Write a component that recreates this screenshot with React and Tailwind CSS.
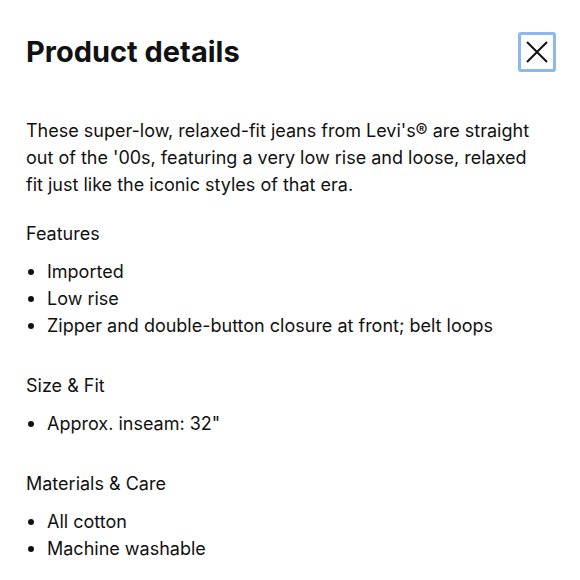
import React from "react";

function Bullet({ children }) {
  return (
    <li className="flex items-center">
      <span className="w-[21px] shrink-0 flex items-center pl-[2px]">
        <span className="block w-[6px] h-[6px] rounded-full bg-[#111]" />
      </span>
      <span>{children}</span>
    </li>
  );
}

export default function App() {
  return (
    <div className="w-[580px] h-[580px] bg-white overflow-hidden text-[#111]" style={{ fontFamily: 'Inter, "Liberation Sans", Arial, sans-serif' }}>
      <div className="flex items-start justify-between pl-[26px] pr-[24px] pt-[32px]">
        <h1 className="text-[29px] font-bold leading-[40px] tracking-[0px]">Product details</h1>
        <button className="w-[38px] h-[40px] border-[3px] border-[#8bb9ee] rounded-[3px] flex items-center justify-center">
          <svg width="22" height="22" viewBox="0 0 22 22" fill="none" stroke="#111" strokeWidth="2">
            <path d="M1 1 L21 21 M21 1 L1 21" />
          </svg>
        </button>
      </div>
      <div className="px-[26px] pt-[45px] text-[18px] leading-[27px]">
        <p className="whitespace-nowrap">These super-low, relaxed-fit jeans from Levi's® are straight<br />out of the '00s, featuring a very low rise and loose, relaxed<br />fit just like the iconic styles of that era.</p>
        <h2 className="mt-[22px]">Features</h2>
        <ul className="mt-[11px]">
          <Bullet>Imported</Bullet>
          <Bullet>Low rise</Bullet>
          <Bullet>Zipper and double-button closure at front; belt loops</Bullet>
        </ul>
        <h2 className="mt-[33px]">Size &amp; Fit</h2>
        <ul className="mt-[11px]">
          <Bullet>Approx. inseam: 32"</Bullet>
        </ul>
        <h2 className="mt-[33px]">Materials &amp; Care</h2>
        <ul className="mt-[11px]">
          <Bullet>All cotton</Bullet>
          <Bullet>Machine washable</Bullet>
        </ul>
      </div>
    </div>
  );
}
